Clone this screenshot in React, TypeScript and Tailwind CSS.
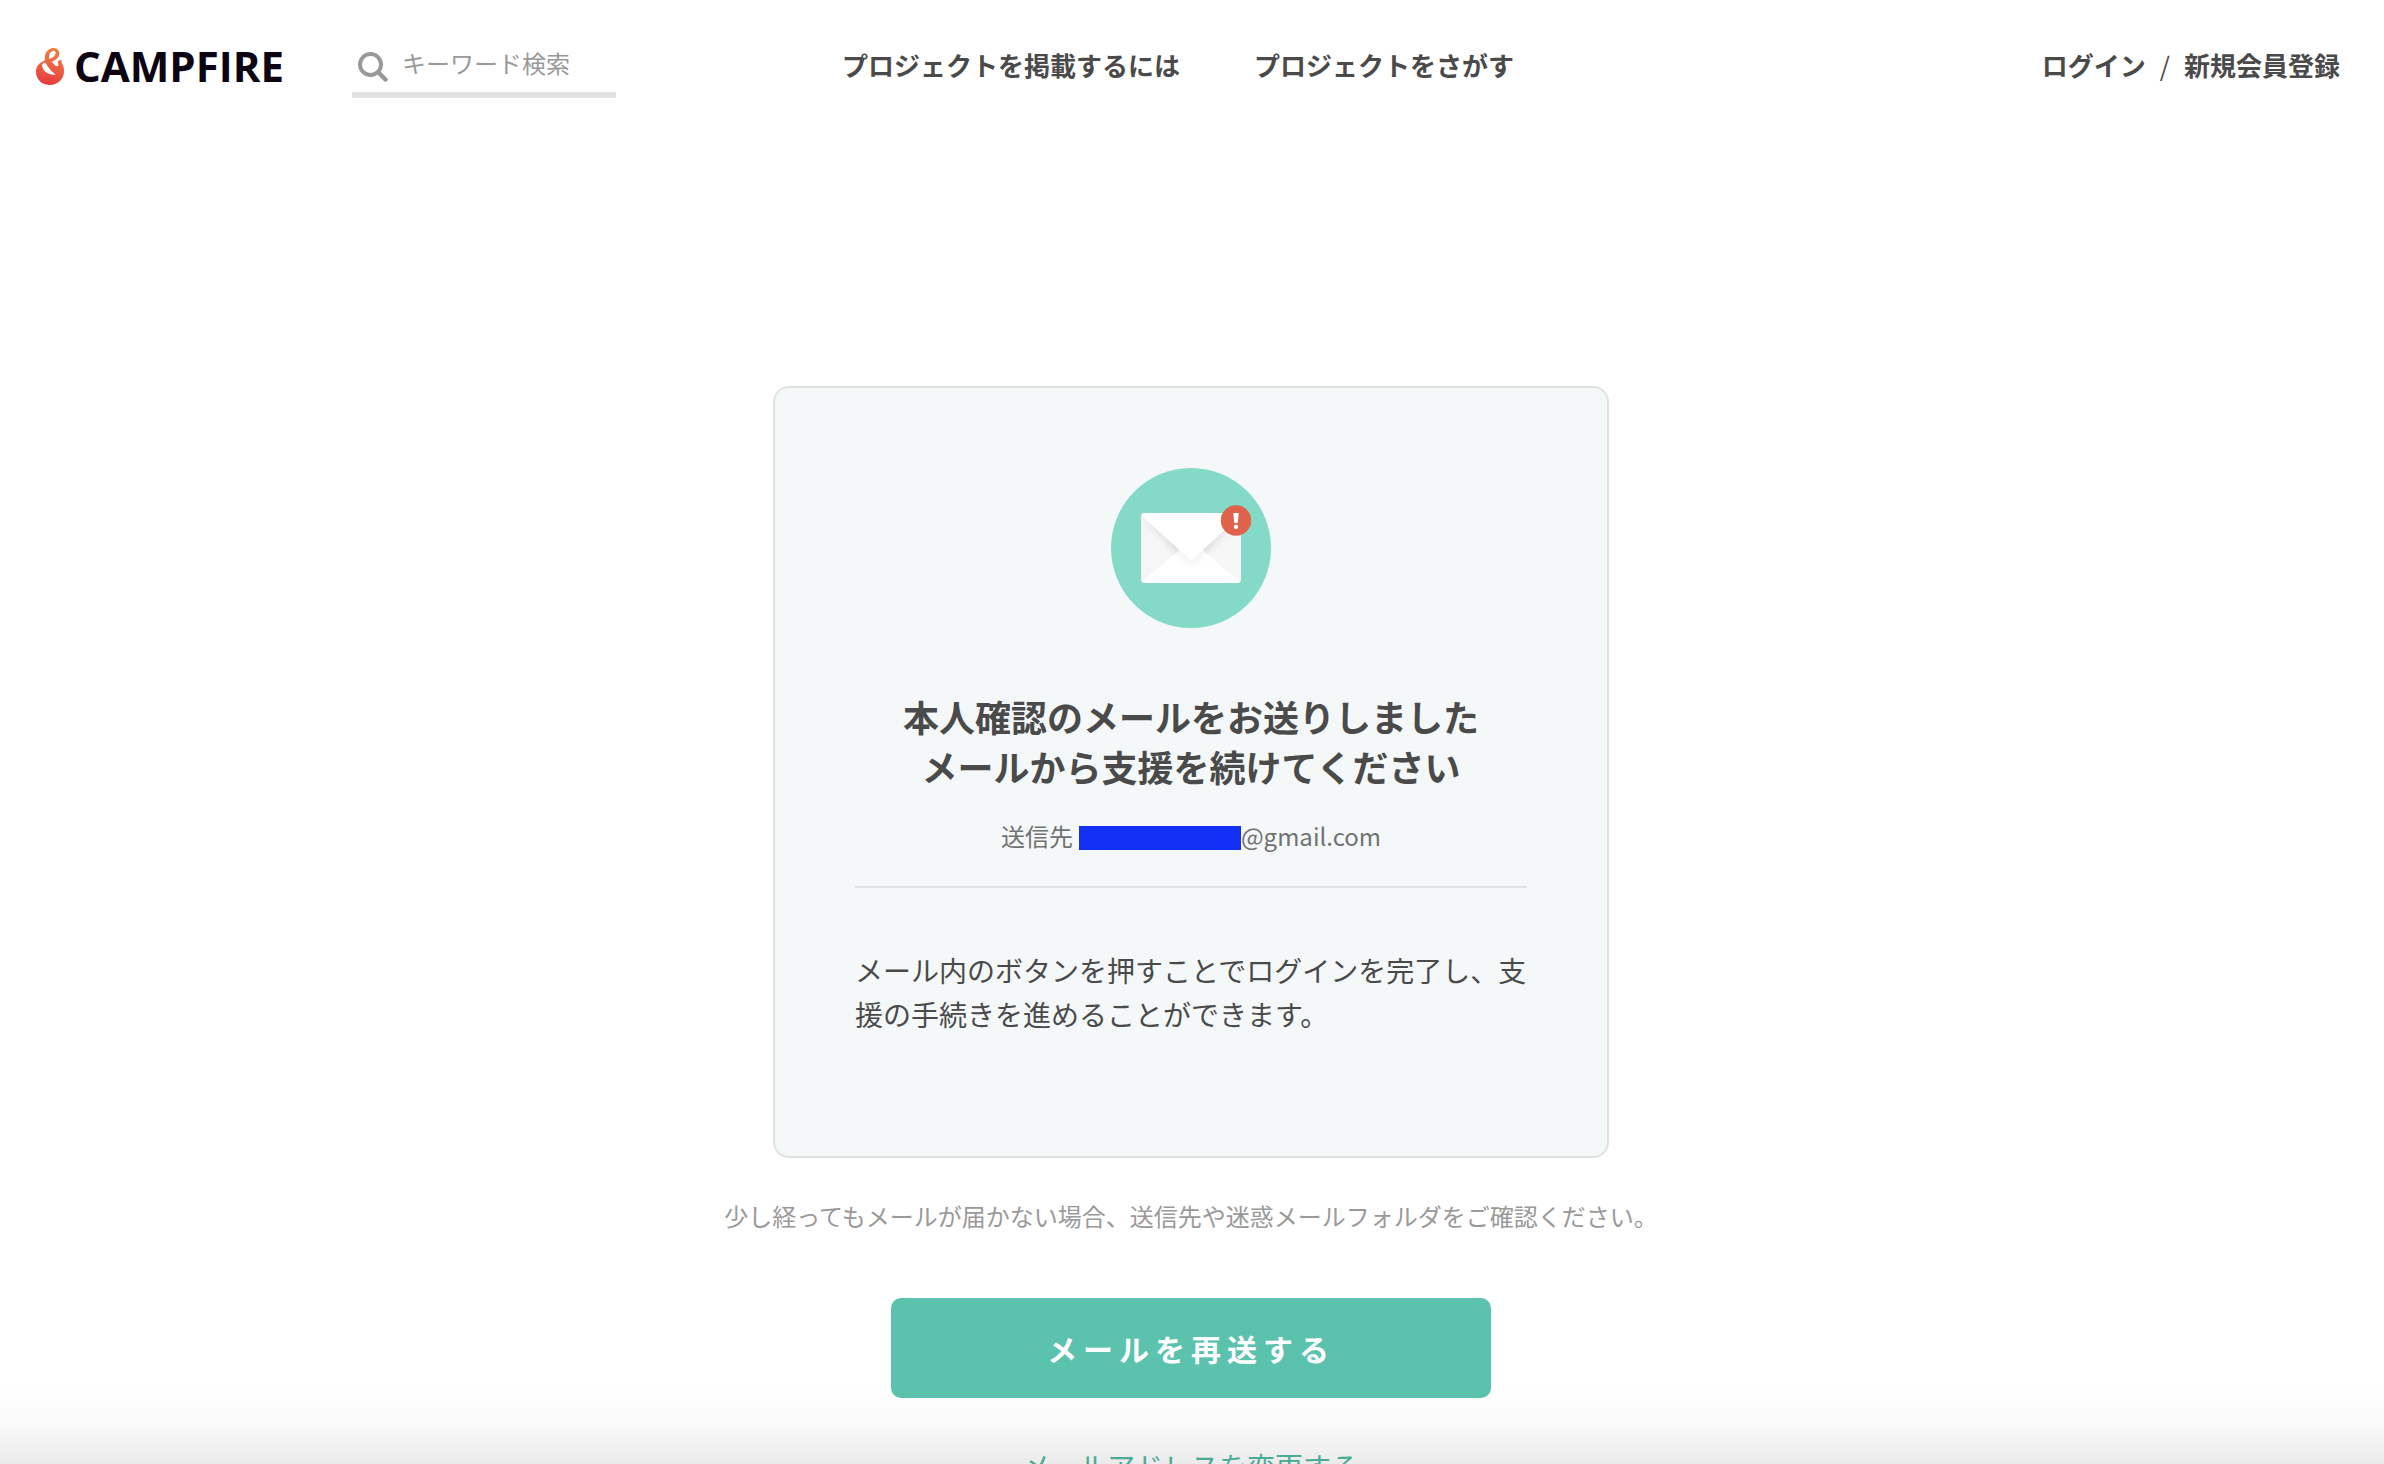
import React from "react";

function FlameMark() {
  return (
    <svg viewBox="0 0 84 111" className="h-[37px] w-7 shrink-0" aria-hidden="true">
      <defs>
        <linearGradient id="flame" x1="0.6" y1="0" x2="0.4" y2="1">
          <stop offset="0" stopColor="#ef7d3c" />
          <stop offset="0.45" stopColor="#ee6344" />
          <stop offset="1" stopColor="#e43a3c" />
        </linearGradient>
      </defs>
      <path
        fill="url(#flame)"
        fillRule="evenodd"
        d="M50 0C62 -1 71 7 70 19C69 29 60 36 47 41C53 48 59 54 64 55C69 54 67 47 65 41C67 37 72 35 79 35C74 38 76 43 80 50C83 56 84 62 84 70C84 93 66 111 42 111C18 111 0 94 0 71C0 54 11 44 27 37C24 20 32 3 50 0ZM52 8C41 11 37 22 40 33C50 30 58 24 59 15C59 10 56 8 52 8ZM21 46C16 50 18 60 26 69C35 78 47 82 60 80C49 73 35 57 29 45C26 44 23 44 21 46Z"
      />
    </svg>
  );
}

function SearchIcon() {
  return (
    <svg viewBox="0 0 30 30" className="mt-2 size-[30px] shrink-0" fill="none" stroke="#999" aria-hidden="true">
      <circle cx="12.5" cy="12.5" r="10.5" strokeWidth="4" />
      <path d="M20.5 20.5L27.5 27.5" strokeWidth="4.5" strokeLinecap="round" />
    </svg>
  );
}

function MailIllustration() {
  return (
    <svg viewBox="0 0 160 160" className="size-40" role="img" aria-label="メール">
      <defs>
        <clipPath id="envelope">
          <rect x="30" y="45" width="100" height="70" rx="4" />
        </clipPath>
        <filter id="soft" x="-30%" y="-30%" width="160%" height="180%">
          <feGaussianBlur stdDeviation="5" />
        </filter>
      </defs>
      <circle cx="80" cy="80" r="80" fill="#85d9c9" />
      <g clipPath="url(#envelope)">
        <rect x="30" y="45" width="100" height="70" fill="#f6f6f7" />
        <path d="M32 49L80 96L128 49Z" fill="#000" opacity="0.1" filter="url(#soft)" />
        <path d="M30 115L80 72L130 115Z" fill="#fff" />
        <path d="M56 73L80 97L104 73Z" fill="#000" opacity="0.06" filter="url(#soft)" />
        <path d="M30 45H130V47L82 91Q80 93 78 91L30 47Z" fill="#fff" />
      </g>
      <circle cx="125" cy="52.500" r="15.200" fill="#e0624a" />
      <path d="M122.200 45H127.800L126.700 55H123.300Z" fill="#fff" />
      <circle cx="125" cy="58.700" r="2.200" fill="#fff" />
    </svg>
  );
}

function Header() {
  return (
    <header className="flex h-[130px] items-center bg-white pr-11 pl-9 text-[26px] leading-10 font-bold">
      <a href="#" className="flex w-[254px] items-center gap-2.5 pt-0.5">
        <FlameMark />
        <span className="font-['Open_Sans'] text-[42px] leading-10 font-bold text-[#0d0413]">CAMPFIRE</span>
      </a>
      <label className="mt-2.5 ml-[62px] flex h-14 w-[264px] items-center gap-3.5 border-b-6 border-[#e2e2e2] pb-2 pl-1.5">
        <SearchIcon />
        <input
          type="search"
          aria-label="キーワード検索"
          placeholder="キーワード検索"
          className="w-full min-w-0 bg-transparent text-2xl font-normal outline-none placeholder:text-[#999]"
        />
      </label>
      <nav className="ml-[226px] flex gap-[74px]">
        <a href="#">プロジェクトを掲載するには</a>
        <a href="#">プロジェクトをさがす</a>
      </nav>
      <div className="ml-auto flex gap-3.5">
        <a href="#">ログイン</a>
        <span className="font-normal">/</span>
        <a href="#">新規会員登録</a>
      </div>
    </header>
  );
}

export default function App() {
  return (
    <div className="relative h-screen overflow-hidden bg-white font-['Noto_Sans_CJK_JP',sans-serif] text-[#4a4a4a]">
      <Header />
      <main className="flex flex-col items-center pt-64 pr-0.5">
        <section className="flex w-[836px] flex-col items-center rounded-2xl border-2 border-[#e0e2e2] bg-[#f4f8f9] px-20 pt-20 pb-[120px]">
          <MailIllustration />
          <h1 className="mt-[63px] text-center text-4xl leading-[50px] font-bold">
            本人確認のメールをお送りしました
            <br />
            メールから支援を続けてください
          </h1>
          <p className="mt-[25px] flex w-full items-center justify-center border-b-2 border-[#e0e4e5] pb-[30px] text-2xl leading-10 text-[#717171]">
            送信先
            <span className="mt-1 ml-1.5 h-6 w-[162px] bg-[#1430f5]" />
            @gmail.com
          </p>
          <p className="mt-[60px] text-[28px] leading-11">
            メール内のボタンを押すことでログインを完了し、支援の手続きを進めることができます。
          </p>
        </section>
        <p className="mt-[38px] text-2xl leading-10 text-[#999]">
          少し経ってもメールが届かない場合、送信先や迷惑メールフォルダをご確認ください。
        </p>
        <button
          type="button"
          className="mt-[62px] h-[100px] w-[600px] rounded-[10px] bg-[#5ac2ad] text-[30px] font-bold tracking-[6px] text-white"
        >
          メールを再送する
        </button>
        <a href="#" className="mt-[46px] text-[28px] leading-11 text-[#4fb8a2]">
          メールアドレスを変更する
        </a>
      </main>
      <div className="pointer-events-none absolute inset-x-0 bottom-0 h-20 bg-linear-to-t from-black/8 via-black/2 to-transparent" />
    </div>
  );
}
